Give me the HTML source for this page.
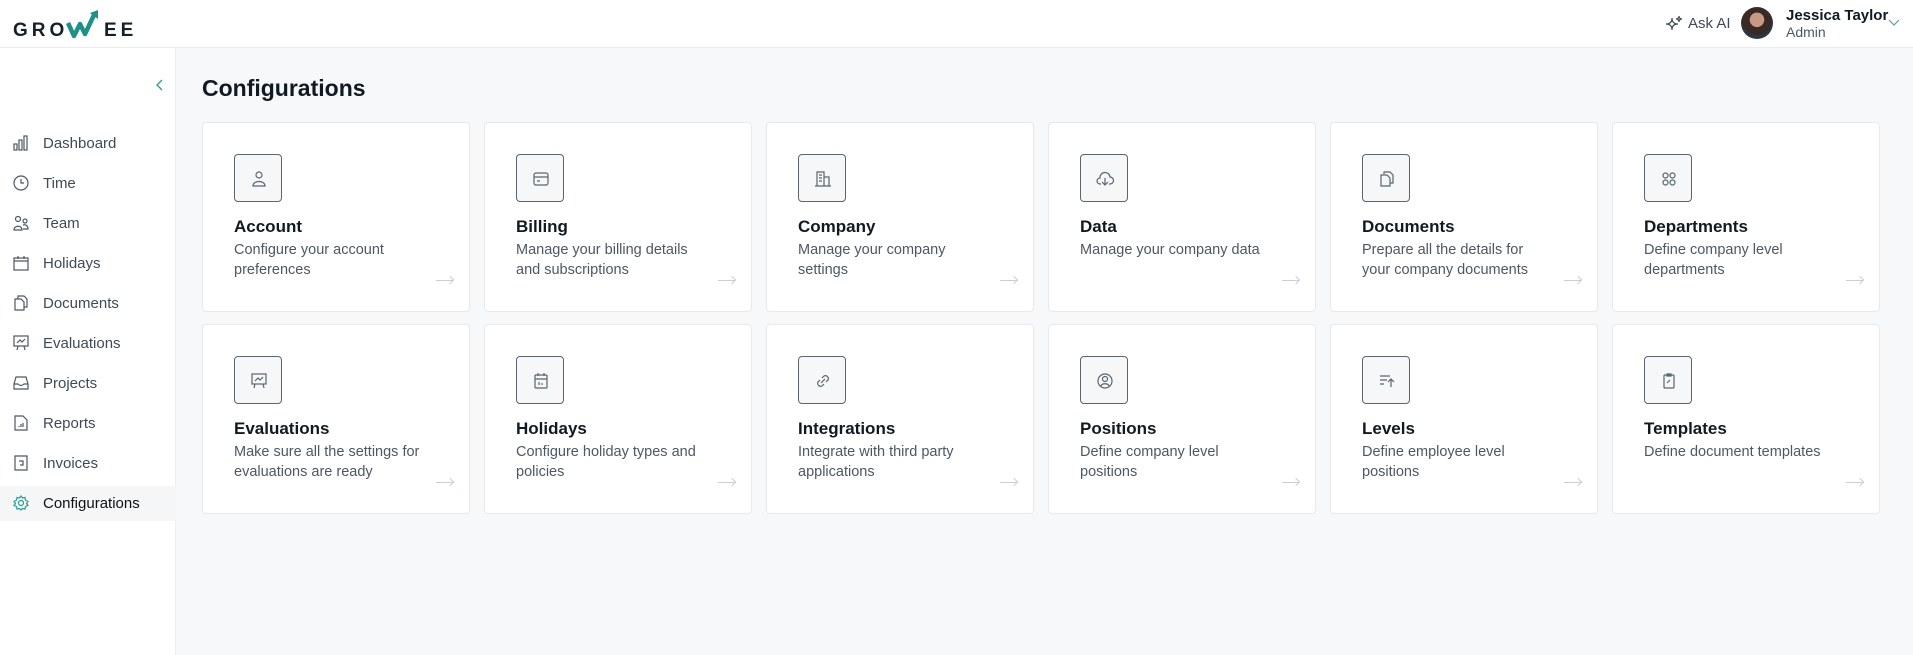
<!DOCTYPE html>
<html><head><meta charset="utf-8"><style>
*{box-sizing:border-box;margin:0;padding:0}
body{width:1913px;height:655px;overflow:hidden;background:#f6f8f9;font-family:"Liberation Sans",sans-serif;position:relative}
.hdr{position:absolute;left:0;top:0;width:1913px;height:48px;background:#fff;border-bottom:1px solid #e8ecef}
.side{position:absolute;left:0;top:48px;width:176px;height:607px;background:#fff;border-right:1px solid #eceff2}
.nav{position:absolute;left:0;width:176px;height:35px;display:flex;align-items:center;font-size:15px;color:#3e4a57}
.nav svg{position:absolute;left:13px;top:9px}
.nav span{position:absolute;left:43px}
.nav.act{background:#f4f6f7;color:#111}
h1{position:absolute;left:202px;top:75px;font-size:23px;font-weight:bold;color:#111a22}
.card{position:absolute;width:268px;height:190px;background:#fff;border:1px solid #e6eaee;border-radius:4px}
.ib{position:absolute;left:31px;top:31px;width:48px;height:48px;border:1.3px solid #5b6570;border-radius:4px;background:#f5f7f8}
.ib svg{position:absolute;left:14px;top:14px}
.t{position:absolute;left:31px;top:94px;font-size:17px;font-weight:bold;color:#111a22}
.d{position:absolute;left:31px;top:117px;white-space:nowrap;font-size:14.5px;line-height:20px;color:#4c5864}
.ar{position:absolute;left:233px;top:157px;width:17px;height:1px;background:#c9ced3}
.ar:after{content:"";position:absolute;right:0;top:-3px;width:5px;height:5px;border-top:1px solid #c9ced3;border-right:1px solid #c9ced3;transform:rotate(45deg)}
</style></head><body>
<div class="hdr">
 <div style="position:absolute;left:13px;top:20px;font-size:19px;font-weight:900;letter-spacing:4px;color:#14202a">GRO</div>
 <svg style="position:absolute;left:66px;top:9px" width="36" height="30" viewBox="0 0 36 30"><path d="M2 14 L8 27 L14 15 L19 25 L28 6" fill="none" stroke="#1f8f88" stroke-width="4.5" stroke-linejoin="round"/><path d="M24 4 L32 1 L32 10 Z" fill="#1f8f88"/></svg>
 <div style="position:absolute;left:104px;top:20px;font-size:19px;font-weight:900;letter-spacing:4px;color:#14202a">EE</div>
 <svg style="position:absolute;left:1665px;top:15px" width="18" height="18" viewBox="0 0 18 18" fill="none" stroke="#3e4a57" stroke-width="1.2"><path d="M7 3 Q7 9 1 9 Q7 9 7 15 Q7 9 13 9 Q7 9 7 3Z"/><path d="M14 1 Q14 4 11 4 Q14 4 14 7 Q14 4 17 4 Q14 4 14 1Z"/></svg>
 <div style="position:absolute;left:1688px;top:15px;font-size:15px;color:#3e4a57">Ask AI</div>
 <div style="position:absolute;left:1741px;top:7px;width:32px;height:32px;border-radius:50%;background:radial-gradient(circle at 50% 40%,#c89a84 0 28%,#3a2a26 30% 60%,#2c3646 62%)"></div>
 <div style="position:absolute;left:1786px;top:7px;font-size:15px;font-weight:bold;color:#111a22">Jessica Taylor</div>
 <div style="position:absolute;left:1786px;top:24px;font-size:14px;color:#4c5864">Admin</div>
 <svg style="position:absolute;left:1888px;top:19px" width="12" height="8"><path d="M1 1 L6 6 L11 1" fill="none" stroke="#5a9e9a" stroke-width="1.2"/></svg>
</div>
<div class="side">
 <svg style="position:absolute;left:156px;top:31px" width="8" height="12"><path d="M6 1 L1 6 L6 11" fill="none" stroke="#2a9a92" stroke-width="1.3"/></svg>
</div>
<div class="nav" style="top:126px"><svg width="16" height="16" fill="none" stroke="#4c5864" stroke-width="1.2"><rect x="1" y="9" width="3" height="6"/><rect x="6" y="5" width="3" height="10"/><rect x="11" y="1" width="3" height="14"/></svg><span>Dashboard</span></div>
<div class="nav" style="top:166px"><svg width="16" height="16" fill="none" stroke="#4c5864" stroke-width="1.2"><circle cx="8" cy="8" r="7"/><path d="M8 4V8H11"/></svg><span>Time</span></div>
<div class="nav" style="top:206px"><svg width="16" height="16" fill="none" stroke="#4c5864" stroke-width="1.2"><circle cx="5" cy="4" r="2.5"/><path d="M1 15C1 10 9 10 9 15Z"/><circle cx="12" cy="6" r="2"/><path d="M10 10C13 9 15 11 15 14H10"/></svg><span>Team</span></div>
<div class="nav" style="top:246px"><svg width="16" height="16" fill="none" stroke="#4c5864" stroke-width="1.2"><rect x="1" y="3" width="14" height="12"/><path d="M1 6H15M5 1V4M11 1V4"/></svg><span>Holidays</span></div>
<div class="nav" style="top:286px"><svg width="16" height="16" fill="none" stroke="#4c5864" stroke-width="1.2"><path d="M5 4V1H11L14 4V12H11"/><path d="M2 4H8L11 7V15H2Z"/></svg><span>Documents</span></div>
<div class="nav" style="top:326px"><svg width="16" height="16" fill="none" stroke="#4c5864" stroke-width="1.2"><rect x="1" y="1" width="14" height="10"/><path d="M4 8L7 5L9 7L12 4M5 11L4 15M11 11L12 15"/></svg><span>Evaluations</span></div>
<div class="nav" style="top:366px"><svg width="16" height="16" fill="none" stroke="#4c5864" stroke-width="1.2"><path d="M1 9L3 2H13L15 9V14H1Z"/><path d="M1 9H5Q8 12 11 9H15"/></svg><span>Projects</span></div>
<div class="nav" style="top:406px"><svg width="16" height="16" fill="none" stroke="#4c5864" stroke-width="1.2"><path d="M2 1H10L14 5V15H2Z"/><path d="M6 12V11M8 12V9M10 12V8"/></svg><span>Reports</span></div>
<div class="nav" style="top:446px"><svg width="16" height="16" fill="none" stroke="#4c5864" stroke-width="1.2"><path d="M2 1H14V15H2Z"/><path d="M6 6H10V10H7"/></svg><span>Invoices</span></div>
<div class="nav act" style="top:486px"><svg width="16" height="16" fill="none" stroke="#2a9a92" stroke-width="1.2"><circle cx="8" cy="8" r="2.5"/><path d="M8 1L9.5 3L12 2.5L12.5 5L15 6.5L13.5 8.5L15 10.5L12.5 11.5L12 14L9.5 13.5L8 15L6.5 13.5L4 14L3.5 11.5L1 10.5L2.5 8.5L1 6.5L3.5 5L4 2.5L6.5 3Z"/></svg><span>Configurations</span></div>

<h1>Configurations</h1>

<div class="card" style="left:202px;top:122px"><div class="ib"><svg width="20" height="20" fill="none" stroke="#5b6570" stroke-width="1.2"><circle cx="10" cy="6" r="3"/><path d="M4 17C4 11 16 11 16 17Z"/></svg></div><div class="t">Account</div><div class="d">Configure your account<br>preferences</div><div class="ar"></div></div>
<div class="card" style="left:484px;top:122px"><div class="ib"><svg width="20" height="20" fill="none" stroke="#5b6570" stroke-width="1.2"><rect x="3" y="4" width="14" height="12" rx="2"/><path d="M3 8H17M6 12H9"/></svg></div><div class="t">Billing</div><div class="d">Manage your billing details<br>and subscriptions</div><div class="ar"></div></div>
<div class="card" style="left:766px;top:122px"><div class="ib"><svg width="20" height="20" fill="none" stroke="#5b6570" stroke-width="1.2"><path d="M4 17V3H11V17M11 8H16V17M2 17H18M6 6H9M6 9H9M6 12H9"/></svg></div><div class="t">Company</div><div class="d">Manage your company<br>settings</div><div class="ar"></div></div>
<div class="card" style="left:1048px;top:122px"><div class="ib"><svg width="20" height="20" fill="none" stroke="#5b6570" stroke-width="1.2"><path d="M6 15H5A3 3 0 0 1 5 9A5 5 0 0 1 15 8A3.5 3.5 0 0 1 15 15H14"/><path d="M10 9V16M7 13L10 16L13 13"/></svg></div><div class="t">Data</div><div class="d">Manage your company data</div><div class="ar"></div></div>
<div class="card" style="left:1330px;top:122px"><div class="ib"><svg width="20" height="20" fill="none" stroke="#5b6570" stroke-width="1.2"><path d="M7 5V3H13L16 6V14H13"/><path d="M4 6H10L13 9V17H4Z"/></svg></div><div class="t">Documents</div><div class="d">Prepare all the details for<br>your company documents</div><div class="ar"></div></div>
<div class="card" style="left:1612px;top:122px"><div class="ib"><svg width="20" height="20" fill="none" stroke="#5b6570" stroke-width="1.2"><circle cx="6.5" cy="6.5" r="2.5"/><circle cx="13.5" cy="6.5" r="2.5"/><circle cx="6.5" cy="13.5" r="2.5"/><circle cx="13.5" cy="13.5" r="2.5"/></svg></div><div class="t">Departments</div><div class="d">Define company level<br>departments</div><div class="ar"></div></div>

<div class="card" style="left:202px;top:324px"><div class="ib"><svg width="20" height="20" fill="none" stroke="#5b6570" stroke-width="1.2"><rect x="3" y="3" width="14" height="10"/><path d="M6 10L9 7L11 9L14 6M6 13L5 17M14 13L15 17"/></svg></div><div class="t">Evaluations</div><div class="d">Make sure all the settings for<br>evaluations are ready</div><div class="ar"></div></div>
<div class="card" style="left:484px;top:324px"><div class="ib"><svg width="20" height="20" fill="none" stroke="#5b6570" stroke-width="1.2"><rect x="4" y="4" width="12" height="13" rx="1"/><path d="M4 8H16M7 2V5M13 2V5M8 14V11M11 14V12"/></svg></div><div class="t">Holidays</div><div class="d">Configure holiday types and<br>policies</div><div class="ar"></div></div>
<div class="card" style="left:766px;top:324px"><div class="ib"><svg width="20" height="20" fill="none" stroke="#5b6570" stroke-width="1.2"><path d="M9 7L11 5A3 3 0 0 1 15 9L13 11M11 13L9 15A3 3 0 0 1 5 11L7 9M8 12L12 8"/></svg></div><div class="t">Integrations</div><div class="d">Integrate with third party<br>applications</div><div class="ar"></div></div>
<div class="card" style="left:1048px;top:324px"><div class="ib"><svg width="20" height="20" fill="none" stroke="#5b6570" stroke-width="1.2"><circle cx="10" cy="10" r="7"/><circle cx="10" cy="8" r="2.5"/><path d="M6 15C7 12 13 12 14 15"/></svg></div><div class="t">Positions</div><div class="d">Define company level<br>positions</div><div class="ar"></div></div>
<div class="card" style="left:1330px;top:324px"><div class="ib"><svg width="20" height="20" fill="none" stroke="#5b6570" stroke-width="1.2"><path d="M3 5H13M3 9H10M3 13H7M14 16V8M11 11L14 8L17 11"/></svg></div><div class="t">Levels</div><div class="d">Define employee level<br>positions</div><div class="ar"></div></div>
<div class="card" style="left:1612px;top:324px"><div class="ib"><svg width="20" height="20" fill="none" stroke="#5b6570" stroke-width="1.2"><rect x="5" y="4" width="10" height="13" rx="1"/><path d="M8 3H12V5H8ZM8 12L11 9"/></svg></div><div class="t">Templates</div><div class="d">Define document templates</div><div class="ar"></div></div>
</body></html>
